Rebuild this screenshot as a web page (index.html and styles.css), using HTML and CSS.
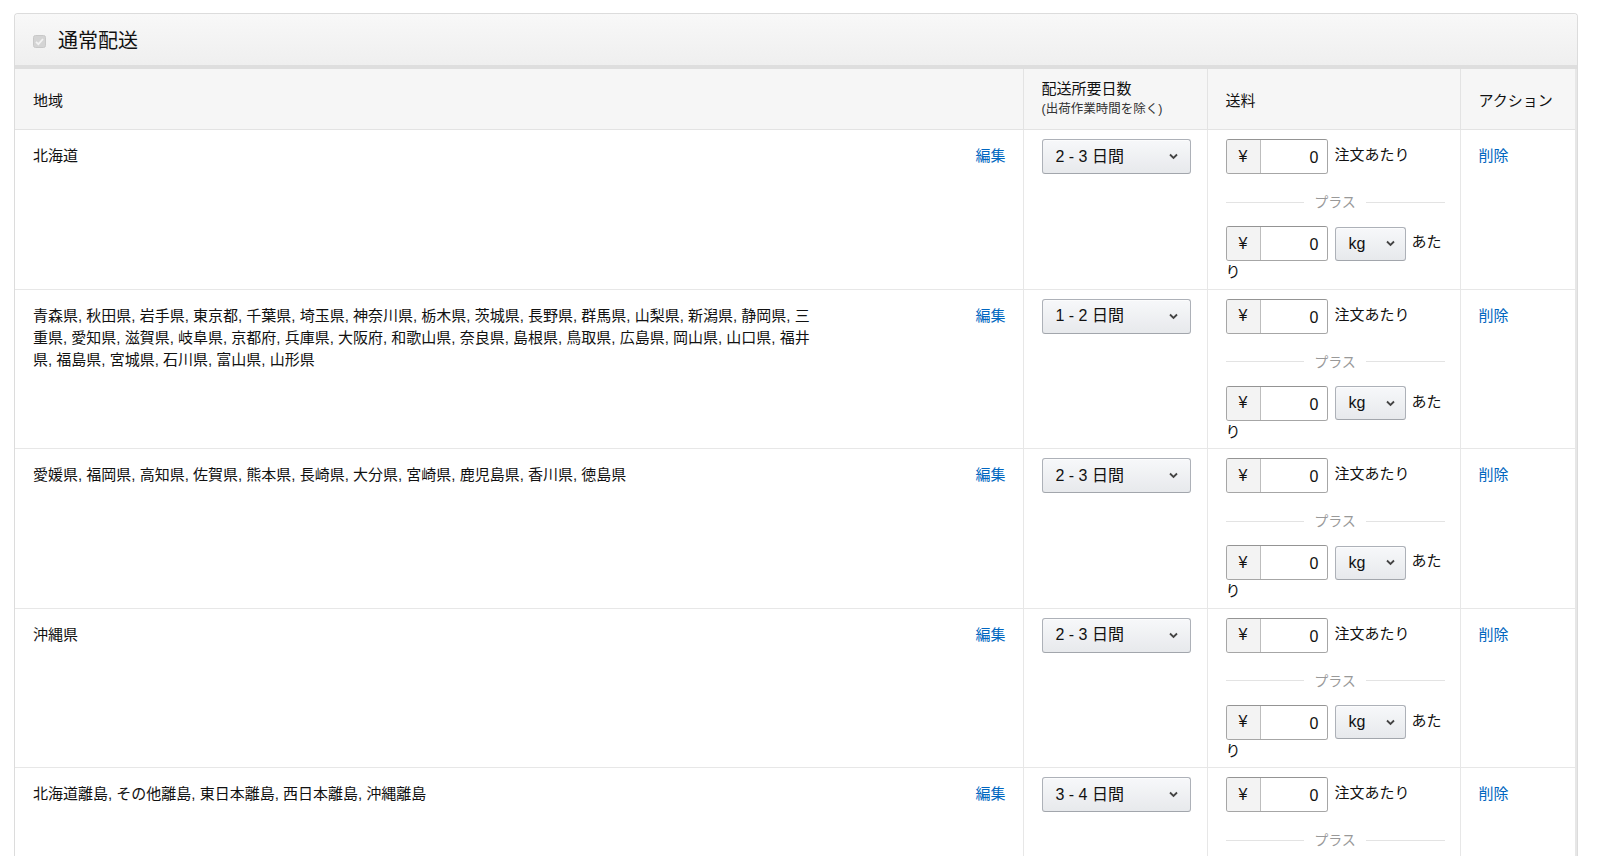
FILE: index.html
```html
<!DOCTYPE html>
<html lang="ja">
<head>
<meta charset="utf-8">
<title>通常配送</title>
<link rel="stylesheet" href="styles.css">
</head>
<body>
<div class="page">
  <div class="panel">
    <div class="panel-heading">
      <span class="chk"><svg width="13" height="13" viewBox="0 0 13 13"><rect x="0.5" y="0.5" width="12" height="12" rx="2" fill="#d4d4d4" stroke="#c8c8c8"/><path d="M3 6.8 L5.4 9.2 L10 4" fill="none" stroke="#f2f2f2" stroke-width="1.8"/></svg></span>
      <h2 class="panel-title">通常配送</h2>
    </div>
    <table class="ship-table">
      <colgroup>
        <col class="c-region"><col class="c-days"><col class="c-fee"><col class="c-action">
      </colgroup>
      <thead>
        <tr>
          <th>地域</th>
          <th><div class="th-main">配送所要日数</div><div class="th-sub">(出荷作業時間を除く)</div></th>
          <th>送料</th>
          <th>アクション</th>
        </tr>
      </thead>
      <tbody>
        <tr>
          <td class="region"><div class="region-wrap"><div class="region-text">北海道</div><a class="link" href="#">編集</a></div></td>
          <td class="days"><div class="select wide"><span>2 - 3 日間</span><svg class="chev" width="9" height="7" viewBox="0 0 9 7"><path d="M1 1.5 L4.5 5 L8 1.5" fill="none" stroke="#444" stroke-width="1.8"/></svg></div></td>
          <td class="fee">
            <div class="fee-line"><div class="igroup"><span class="pre">¥</span><span class="val">0</span></div>注文あたり</div>
            <div class="plus"><span>プラス</span></div>
            <div class="fee-line"><div class="igroup"><span class="pre">¥</span><span class="val">0</span></div><div class="select unit"><span>kg</span><svg class="chev" width="9" height="7" viewBox="0 0 9 7"><path d="M1 1.5 L4.5 5 L8 1.5" fill="none" stroke="#444" stroke-width="1.8"/></svg></div>あたり</div>
          </td>
          <td class="action"><a class="link" href="#">削除</a></td>
        </tr>
        <tr>
          <td class="region"><div class="region-wrap"><div class="region-text">青森県, 秋田県, 岩手県, 東京都, 千葉県, 埼玉県, 神奈川県, 栃木県, 茨城県, 長野県, 群馬県, 山梨県, 新潟県, 静岡県, 三重県, 愛知県, 滋賀県, 岐阜県, 京都府, 兵庫県, 大阪府, 和歌山県, 奈良県, 島根県, 鳥取県, 広島県, 岡山県, 山口県, 福井県, 福島県, 宮城県, 石川県, 富山県, 山形県</div><a class="link" href="#">編集</a></div></td>
          <td class="days"><div class="select wide"><span>1 - 2 日間</span><svg class="chev" width="9" height="7" viewBox="0 0 9 7"><path d="M1 1.5 L4.5 5 L8 1.5" fill="none" stroke="#444" stroke-width="1.8"/></svg></div></td>
          <td class="fee">
            <div class="fee-line"><div class="igroup"><span class="pre">¥</span><span class="val">0</span></div>注文あたり</div>
            <div class="plus"><span>プラス</span></div>
            <div class="fee-line"><div class="igroup"><span class="pre">¥</span><span class="val">0</span></div><div class="select unit"><span>kg</span><svg class="chev" width="9" height="7" viewBox="0 0 9 7"><path d="M1 1.5 L4.5 5 L8 1.5" fill="none" stroke="#444" stroke-width="1.8"/></svg></div>あたり</div>
          </td>
          <td class="action"><a class="link" href="#">削除</a></td>
        </tr>
        <tr>
          <td class="region"><div class="region-wrap"><div class="region-text">愛媛県, 福岡県, 高知県, 佐賀県, 熊本県, 長崎県, 大分県, 宮崎県, 鹿児島県, 香川県, 徳島県</div><a class="link" href="#">編集</a></div></td>
          <td class="days"><div class="select wide"><span>2 - 3 日間</span><svg class="chev" width="9" height="7" viewBox="0 0 9 7"><path d="M1 1.5 L4.5 5 L8 1.5" fill="none" stroke="#444" stroke-width="1.8"/></svg></div></td>
          <td class="fee">
            <div class="fee-line"><div class="igroup"><span class="pre">¥</span><span class="val">0</span></div>注文あたり</div>
            <div class="plus"><span>プラス</span></div>
            <div class="fee-line"><div class="igroup"><span class="pre">¥</span><span class="val">0</span></div><div class="select unit"><span>kg</span><svg class="chev" width="9" height="7" viewBox="0 0 9 7"><path d="M1 1.5 L4.5 5 L8 1.5" fill="none" stroke="#444" stroke-width="1.8"/></svg></div>あたり</div>
          </td>
          <td class="action"><a class="link" href="#">削除</a></td>
        </tr>
        <tr>
          <td class="region"><div class="region-wrap"><div class="region-text">沖縄県</div><a class="link" href="#">編集</a></div></td>
          <td class="days"><div class="select wide"><span>2 - 3 日間</span><svg class="chev" width="9" height="7" viewBox="0 0 9 7"><path d="M1 1.5 L4.5 5 L8 1.5" fill="none" stroke="#444" stroke-width="1.8"/></svg></div></td>
          <td class="fee">
            <div class="fee-line"><div class="igroup"><span class="pre">¥</span><span class="val">0</span></div>注文あたり</div>
            <div class="plus"><span>プラス</span></div>
            <div class="fee-line"><div class="igroup"><span class="pre">¥</span><span class="val">0</span></div><div class="select unit"><span>kg</span><svg class="chev" width="9" height="7" viewBox="0 0 9 7"><path d="M1 1.5 L4.5 5 L8 1.5" fill="none" stroke="#444" stroke-width="1.8"/></svg></div>あたり</div>
          </td>
          <td class="action"><a class="link" href="#">削除</a></td>
        </tr>
        <tr>
          <td class="region"><div class="region-wrap"><div class="region-text">北海道離島, その他離島, 東日本離島, 西日本離島, 沖縄離島</div><a class="link" href="#">編集</a></div></td>
          <td class="days"><div class="select wide"><span>3 - 4 日間</span><svg class="chev" width="9" height="7" viewBox="0 0 9 7"><path d="M1 1.5 L4.5 5 L8 1.5" fill="none" stroke="#444" stroke-width="1.8"/></svg></div></td>
          <td class="fee">
            <div class="fee-line"><div class="igroup"><span class="pre">¥</span><span class="val">0</span></div>注文あたり</div>
            <div class="plus"><span>プラス</span></div>
            <div class="fee-line"><div class="igroup"><span class="pre">¥</span><span class="val">0</span></div><div class="select unit"><span>kg</span><svg class="chev" width="9" height="7" viewBox="0 0 9 7"><path d="M1 1.5 L4.5 5 L8 1.5" fill="none" stroke="#444" stroke-width="1.8"/></svg></div>あたり</div>
          </td>
          <td class="action"><a class="link" href="#">削除</a></td>
        </tr>
      </tbody>
    </table>
  </div>
</div>
</body>
</html>
```

FILE: styles.css
```css
html, body {
  margin: 0;
  padding: 0;
  height: 856px;
  overflow: hidden;
  background: #fff;
}
body {
  font-family: "Liberation Sans", "Noto Sans CJK JP", sans-serif;
  font-size: 15px;
  color: #111;
  line-height: 22px;
}
.page {
  padding: 13px 22px 0 14px;
}
.panel {
  border: 1px solid #dcdcdc;
  border-radius: 4px 4px 0 0;
  border-bottom: none;
}
.panel-heading {
  display: flex;
  align-items: center;
  height: 48px;
  padding: 3px 0 0 18px;
  background: linear-gradient(#f8f8f8, #efefef);
  border-bottom: 4px solid #dedede;
  border-radius: 4px 4px 0 0;
}
.chk {
  display: inline-flex;
  width: 13px;
  height: 13px;
  margin-right: 12px;
}
.panel-title {
  margin: 0;
  font-size: 20px;
  font-weight: normal;
  color: #111;
}
.ship-table {
  width: 100%;
  border-collapse: collapse;
  table-layout: fixed;
}
.c-region { width: 1008px; }
.c-days { width: 184px; }
.c-fee { width: 253px; }
.c-action { width: auto; }
.ship-table th {
  height: 57px;
  padding: 3px 18px 0;
  text-align: left;
  font-weight: normal;
  vertical-align: middle;
  background: #f6f6f6;
  border-bottom: 1px solid #e3e3e3;
  border-right: 1px solid #e3e3e3;
  color: #111;
}
.ship-table th:last-child,
.ship-table td:last-child {
  border-right: 2px solid #e7e7e7;
}
.th-main {
  line-height: 20px;
  margin-top: -3px;
}
.th-sub {
  font-size: 12.5px;
  line-height: 20px;
  color: #333;
}
.ship-table td {
  vertical-align: top;
  border-bottom: 1px solid #e7e7e7;
  border-right: 1px solid #e7e7e7;
  padding: 0 17px 0 18px;
}
.region, .action {
  padding-top: 15px !important;
}
.region-wrap {
  display: flex;
  justify-content: space-between;
  align-items: flex-start;
}
.region-text {
  width: 785px;
}
.link {
  color: #0066c0;
  text-decoration: none;
}
.days {
  padding-top: 9px !important;
}
.select {
  display: flex;
  align-items: center;
  justify-content: space-between;
  box-sizing: border-box;
  height: 35px;
  border: 1px solid #adb1b8;
  border-bottom-color: #a2a6ac;
  border-radius: 3px;
  background: linear-gradient(#f7f8fa, #e7e9ec);
  box-shadow: inset 0 1px 0 rgba(255,255,255,.6);
  color: #111;
}
.select.wide {
  width: 149px;
  padding: 0 12px 0 13px;
  font-size: 16px;
}
.select .chev {
  flex: none;
}
.fee {
  padding-top: 9px !important;
  padding-bottom: 5.5px !important;
  padding-right: 15px !important;
}
.fee-line {
  line-height: 22px;
}
.igroup {
  display: inline-flex;
  vertical-align: middle;
  box-sizing: border-box;
  width: 102px;
  height: 35px;
  border: 1px solid #a6a6a6;
  border-top-color: #949494;
  border-radius: 3px;
  overflow: hidden;
  margin-right: 7px;
  box-shadow: inset 0 1px 0 rgba(0,0,0,.05);
}
.igroup .pre {
  width: 33px;
  flex: none;
  background: #f3f3f3;
  border-right: 1px solid #bdbdbd;
  display: flex;
  align-items: center;
  justify-content: center;
  color: #111;
  font-size: 16px;
}
.igroup .val {
  flex: 1;
  display: flex;
  align-items: center;
  justify-content: flex-end;
  padding-right: 8px;
  padding-top: 3px;
  background: #fff;
  font-size: 16px;
}
.select.unit {
  display: inline-flex;
  vertical-align: middle;
  width: 71px;
  height: 34px;
  padding: 0 10px 0 13px;
  margin-right: 6px;
  font-size: 16px;
}
.plus {
  display: flex;
  align-items: center;
  margin: 18px 0 14px;
  height: 20px;
  font-size: 14px;
  color: #999;
}
.plus::before, .plus::after {
  content: "";
  flex: 1;
  height: 1px;
  background: #e3e3e3;
}
.plus span {
  padding: 0 10px;
}
```
